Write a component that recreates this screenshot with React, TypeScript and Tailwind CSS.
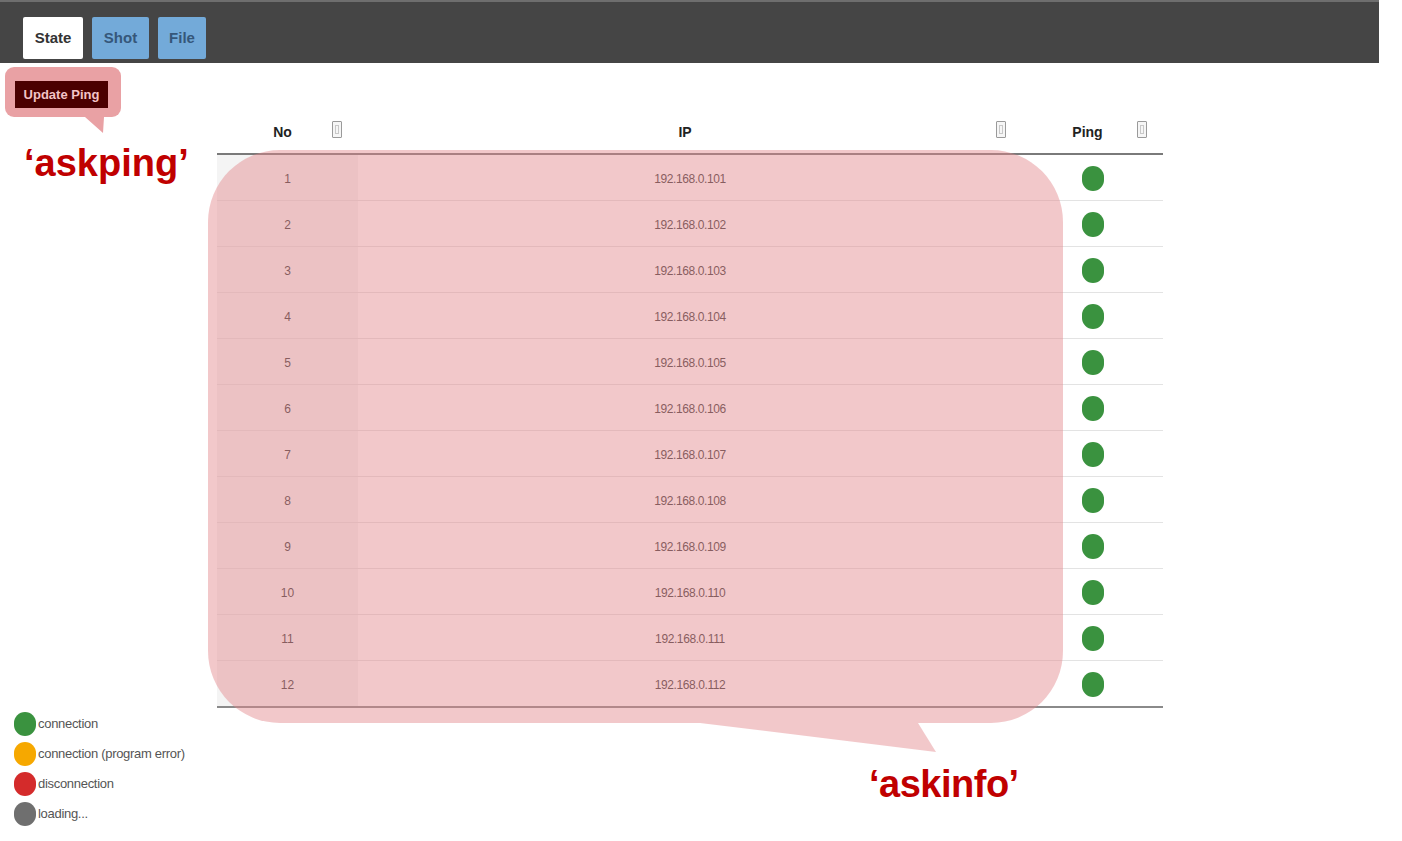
import React from 'react'

const rows = Array.from({ length: 12 }, (_, i) => ({
  no: i + 1,
  ip: `192.168.0.${101 + i}`,
}))

function SortIcon() {
  return (
    <span className="absolute right-[16px] top-[10px] w-[10px] h-[17px] border border-[#9a9a9a] bg-[#f6f6f6] rounded-[1px] flex items-center justify-center">
      <span className="w-[4px] h-[9px] border border-[#c8c8c8]" />
    </span>
  )
}

const legend = [
  { color: 'bg-[#3a923f]', label: 'connection' },
  { color: 'bg-[#f6a800]', label: 'connection (program error)' },
  { color: 'bg-[#d42b2b]', label: 'disconnection' },
  { color: 'bg-[#6f6f6f]', label: 'loading...' },
]

export default function App() {
  return (
    <div
      className="relative w-[1402px] h-[841px] bg-white overflow-hidden"
      style={{ fontFamily: '"Liberation Sans", "Noto Sans", sans-serif' }}
    >
      {/* Top bar */}
      <div className="w-[1379px] h-[63px] bg-[#454545] border-t-2 border-[#6e6e6e] flex items-end gap-[9px] pl-[23px] pb-[4px]">
        <div className="w-[60px] h-[42px] bg-white rounded-[2px] flex items-center justify-center text-[15px] font-bold text-[#333]">
          State
        </div>
        <div className="w-[57px] h-[42px] bg-[#73aad9] rounded-[2px] flex items-center justify-center text-[15px] font-bold text-[#35577a]">
          Shot
        </div>
        <div className="w-[48px] h-[42px] bg-[#73aad9] rounded-[2px] flex items-center justify-center text-[15px] font-bold text-[#35577a]">
          File
        </div>
      </div>

      <div className="flex">
        {/* Left column */}
        <div className="w-[217px] h-[778px] relative flex flex-col">
          <div className="relative ml-[5px] mt-[4px] w-[116px] h-[50px] bg-[#e9a1a4] rounded-[9px] pl-[10px] pt-[14px]">
            <button className="w-[93px] h-[27px] bg-[#4b0000] text-[#f3c4c6] text-[13px] font-semibold">
              Update Ping
            </button>
            <svg className="absolute left-[78px] top-[50px]" width="24" height="16" viewBox="0 0 24 16">
              <polygon points="2,0 21,0 20,16" fill="#e9a1a4" />
            </svg>
          </div>
          <div className="ml-[24px] mt-[25px] text-[38px] leading-[42px] font-bold text-[#c00000]">
            ‘askping’
          </div>
          <div className="mt-auto mb-[15px] ml-[14px] flex flex-col gap-[6px]">
            {legend.map((l) => (
              <div key={l.label} className="flex items-center h-[24px]">
                <span className={`w-[22px] h-[24px] rounded-full ${l.color} blur-[0.5px]`} />
                <span className="ml-[2px] text-[13px] text-[#555] tracking-[-0.3px]">{l.label}</span>
              </div>
            ))}
          </div>
        </div>

        {/* Table */}
        <div className="w-[946px] mt-[48px]">
          <div className="flex h-[44px] border-b-2 border-[#7a7a7a] text-[14px] font-bold text-[#222]">
            <div className="relative w-[141px] flex items-center justify-center pr-[10px]">
              No
              <SortIcon />
            </div>
            <div className="relative w-[664px] flex items-center justify-center pr-[10px]">
              IP
              <SortIcon />
            </div>
            <div className="relative w-[141px] flex items-center justify-center pr-[10px]">
              Ping
              <SortIcon />
            </div>
          </div>
          {rows.map((r, i) => (
            <div
              key={r.no}
              className={`flex h-[46px] pt-[2px] text-[12px] text-[#3a3a3a] ${i < rows.length - 1 ? 'border-b border-[#e3e3e3]' : 'h-[47px] border-b-2 border-[#8a8a8a]'}`}
            >
              <div className="w-[141px] bg-[#f4f4f4] -mt-[2px] pt-[2px] flex items-center justify-center">{r.no}</div>
              <div className="w-[664px] flex items-center justify-center tracking-[-0.4px]">{r.ip}</div>
              <div className="w-[141px] flex items-center justify-center">
                <span className="w-[22px] h-[25px] rounded-full bg-[#3a923f] blur-[0.4px]" />
              </div>
            </div>
          ))}
        </div>
      </div>

      {/* askinfo callout overlay */}
      <div className="absolute left-[208px] top-[150px] w-[855px] h-[573px] rounded-[72px] bg-[rgba(226,136,140,0.46)] pointer-events-none" />
      <svg className="absolute left-[0px] top-[723px] pointer-events-none" width="1402" height="40" viewBox="0 723 1402 40">
        <polygon points="700,723 936,752 918,723" fill="rgba(226,136,140,0.46)" />
      </svg>
      <div className="absolute left-[869px] top-[762px] text-[38px] leading-[44px] font-bold text-[#c00000] tracking-[-0.5px]">
        ‘askinfo’
      </div>
    </div>
  )
}
